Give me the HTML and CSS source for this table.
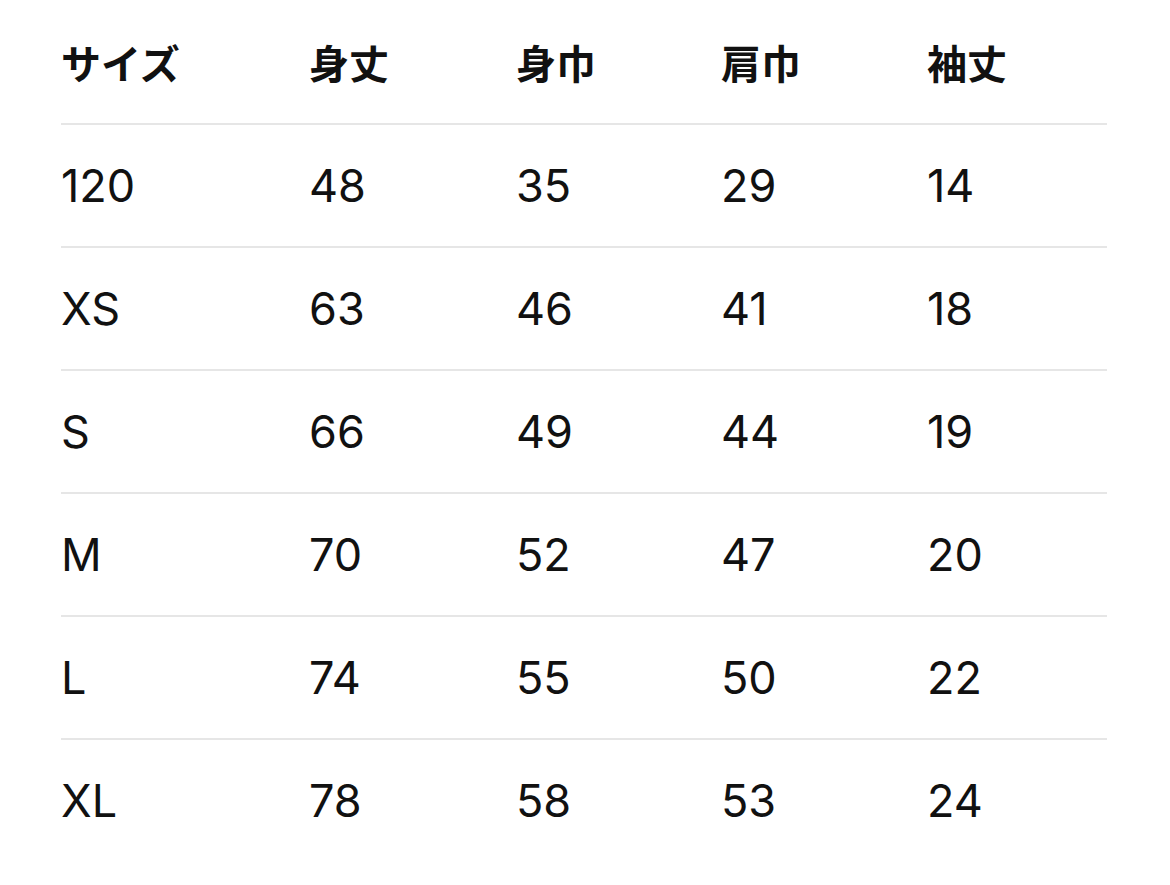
FILE: index.html
```html
<!DOCTYPE html>
<html lang="ja">
<head>
<meta charset="utf-8">
<link rel="stylesheet" href="styles.css">
</head>
<body>
<div class="size-table">
  <div class="row head">
    <div class="cell">サイズ</div><div class="cell">身丈</div><div class="cell">身巾</div><div class="cell">肩巾</div><div class="cell">袖丈</div>
  </div>
  <div class="row">
    <div class="cell">120</div><div class="cell">48</div><div class="cell">35</div><div class="cell">29</div><div class="cell">14</div>
  </div>
  <div class="row">
    <div class="cell">XS</div><div class="cell">63</div><div class="cell">46</div><div class="cell">41</div><div class="cell">18</div>
  </div>
  <div class="row">
    <div class="cell">S</div><div class="cell">66</div><div class="cell">49</div><div class="cell">44</div><div class="cell">19</div>
  </div>
  <div class="row">
    <div class="cell">M</div><div class="cell">70</div><div class="cell">52</div><div class="cell">47</div><div class="cell">20</div>
  </div>
  <div class="row">
    <div class="cell">L</div><div class="cell">74</div><div class="cell">55</div><div class="cell">50</div><div class="cell">22</div>
  </div>
  <div class="row last">
    <div class="cell">XL</div><div class="cell">78</div><div class="cell">58</div><div class="cell">53</div><div class="cell">24</div>
  </div>
</div>
</body>
</html>
```
FILE: styles.css
```css
html, body {
  margin: 0;
  padding: 0;
  background: #ffffff;
}

body {
  font-family: Inter, "Noto Sans CJK JP", sans-serif;
  color: #111111;
}

.size-table {
  width: 1046px;
  margin-left: 61px;
}

.row {
  display: grid;
  grid-template-columns: 248px 207px 205px 206px 180px;
  height: 121px;
  align-items: center;
  border-bottom: 2px solid #e6e6e6;
  font-size: 45px;
  font-weight: 400;
}

.row.last {
  border-bottom: none;
}

.row.head {
  height: 123px;
  font-family: "Noto Sans CJK JP", sans-serif;
  font-weight: 700;
  font-size: 40px;
}

.cell {
  white-space: nowrap;
  line-height: 1;
}
```
